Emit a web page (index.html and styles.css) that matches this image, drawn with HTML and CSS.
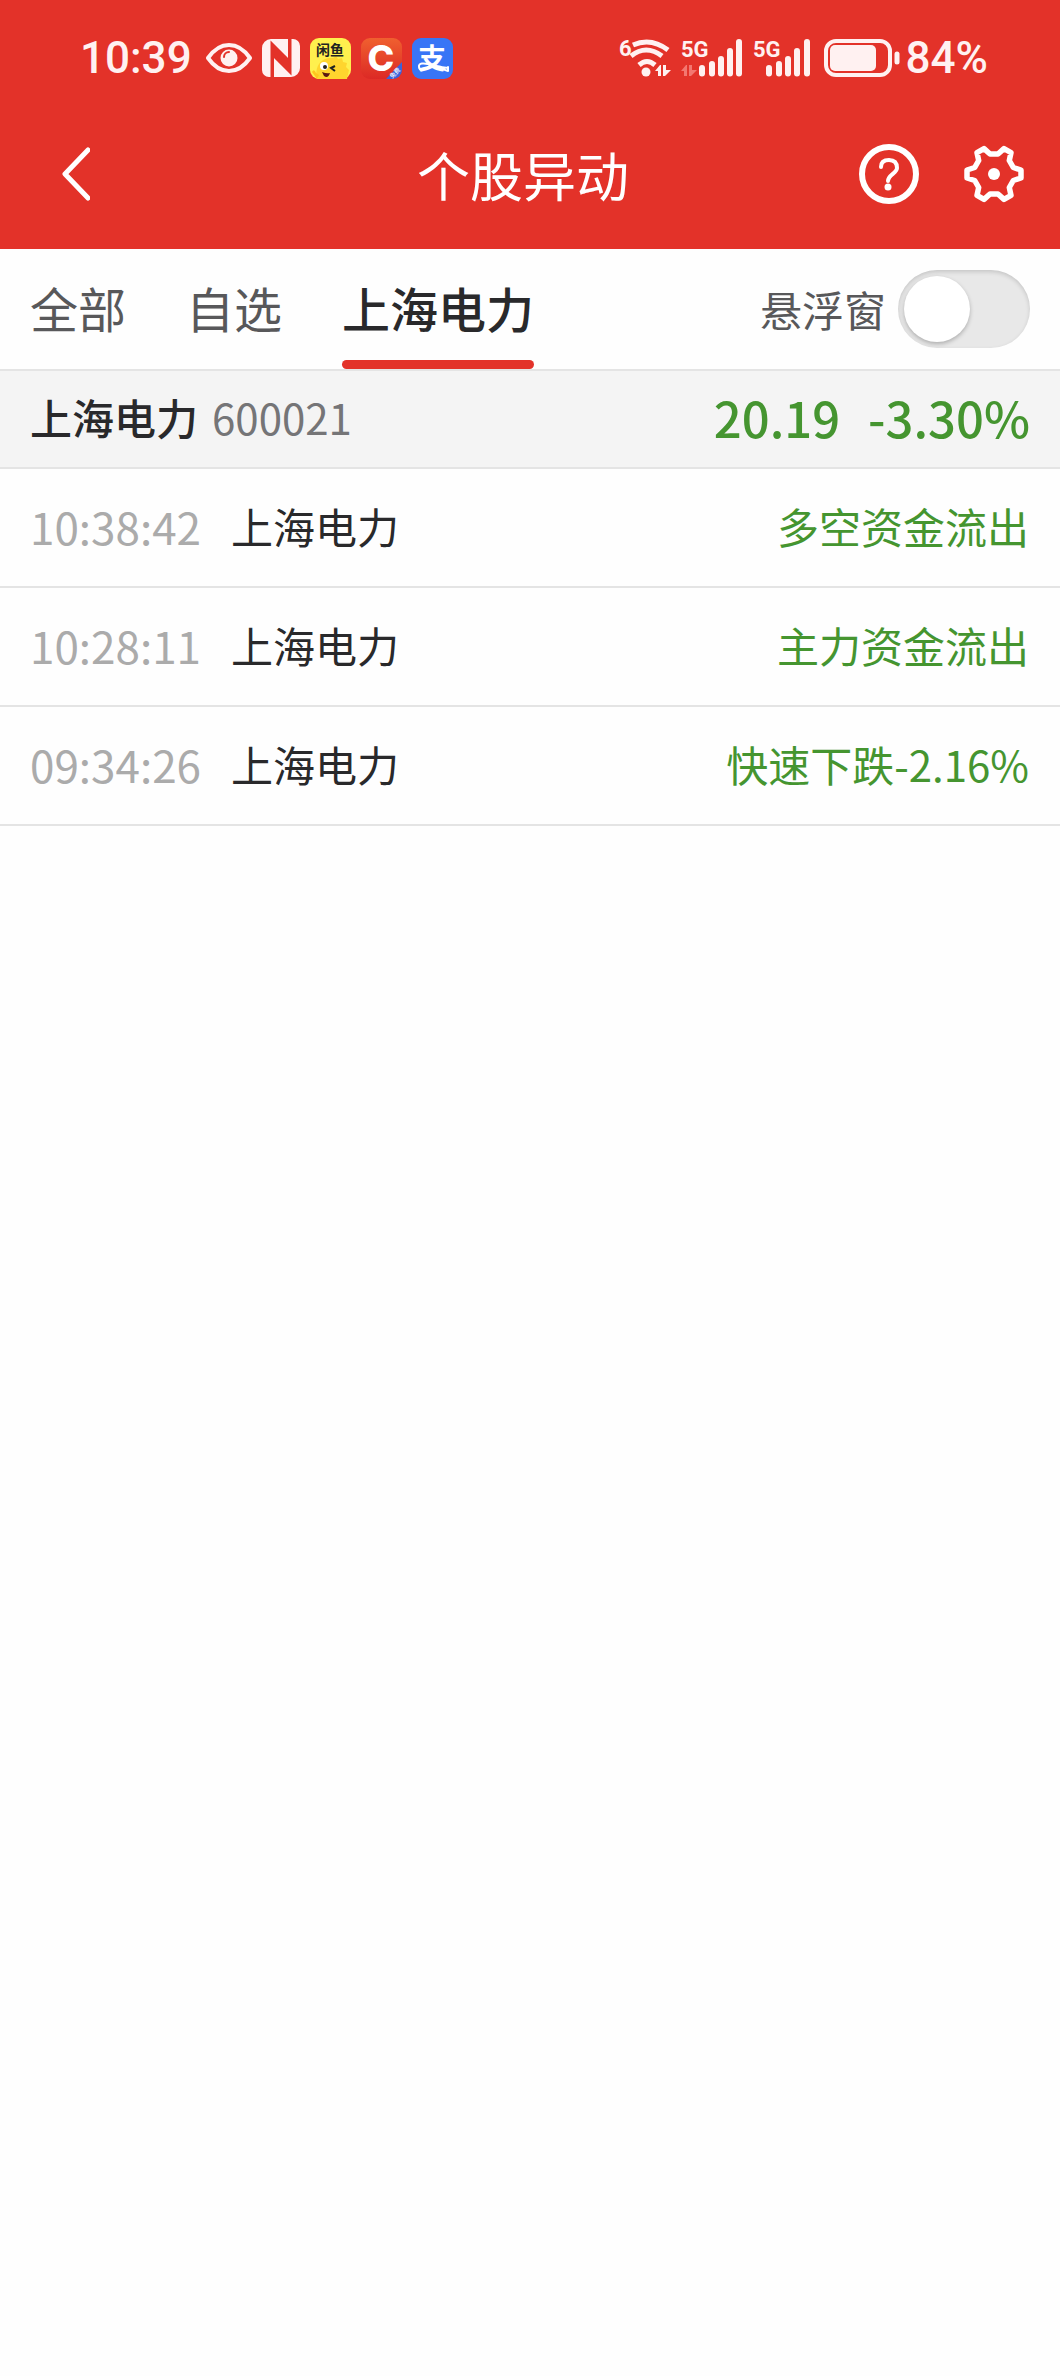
FILE: index.html
```html
<!DOCTYPE html>
<html lang="zh-CN">
  <head>
    <meta charset="UTF-8" />
    <meta name="viewport" content="width=device-width, initial-scale=1.0" />
    <title>个股异动</title>
    <link rel="stylesheet" href="styles.css">
  </head>
  <body>
    <header class="header">
      <div class="status">
        <div class="status-left">
          <span class="clock">10:39</span>
          <svg width="46" height="32" viewBox="0 0 46 32">
            <path d="M2 16Q11 3 23 3T44 16Q35 29 23 29T2 16Z" fill="none" stroke="#fff1f1" stroke-width="4" stroke-linejoin="round" />
            <circle cx="23" cy="16" r="8.500" fill="#fff1f1" />
            <path d="M18 15a5 5 0 0 1 5-5" fill="none" stroke="#e33229" stroke-width="2" stroke-linecap="round" />
          </svg>
          <svg width="38" height="38" viewBox="0 0 38 38">
            <path d="M9 0h17v21L9 5v33H7a7 7 0 0 1-7-7V9a9 9 0 0 1 9-9Z" fill="#fff1f1" />
            <path d="M29 38H12V17l17 16V0h2a7 7 0 0 1 7 7v22a9 9 0 0 1-9 9Z" fill="#fff1f1" />
            <path d="M10 38V5l17 17M28 0v33L11 16" fill="none" stroke="#e33229" stroke-width="3" />
          </svg>
          <svg width="41" height="41" viewBox="0 0 41 41">
            <rect width="41" height="41" rx="9" fill="#fff04e" />
            <path d="M7 41C4 26 13 19 23 20l3-2 2 3 4-1 1 4 4 1-1 4 3 3-2 9Z" fill="#ffd52e" />
            <path d="M2 34q2-4 4 1l3 2-2 4Z" fill="#ffc51f" />
            <circle cx="14" cy="28" r="4" fill="#fff" />
            <circle cx="15" cy="29" r="2" fill="#222" />
            <path d="m25 28-4 2 4 3" fill="none" stroke="#222" stroke-width="2" />
            <path d="M12 34q5 2 8 1-2 6-6 3Z" fill="#5b1712" />
            <text x="6" y="17" class="app-fish">闲鱼</text>
          </svg>
          <svg width="41" height="41" viewBox="0 0 41 41">
            <defs>
              <linearGradient id="appRed" x2="0" y2="1">
                <stop stop-color="#f0602f" />
                <stop offset="1" stop-color="#dc2925" />
              </linearGradient>
            </defs>
            <rect width="41" height="41" rx="9" fill="url(#appRed)" />
            <path d="M41 24v8a9 9 0 0 1-9 9h-7Z" fill="#3a63dc" />
            <text x="20" y="33" class="app-c">C</text>
            <text x="34" y="37" class="app-free" transform="rotate(-45 34 35)">免费</text>
          </svg>
          <svg width="41" height="41" viewBox="0 0 41 41">
            <rect width="41" height="41" rx="9" fill="#3875f6" />
            <text x="20" y="31" class="app-pay">支</text>
            <path d="M18 28Q8 35 7 29t14-2 15 2v4q-8-2-16-7" fill="none" stroke="#fff" stroke-width="2" stroke-linejoin="round" />
          </svg>
        </div>
        <div class="status-right">
          <svg width="52" height="42" viewBox="0 0 52 42">
            <text x="0" y="19" class="net">6</text>
            <g fill="none" stroke="#fff1f1" stroke-width="5">
              <path d="M14 8q18-8 35 5" />
              <path d="M12 19q15-12 31 0" />
              <path d="M20 28q8-7 16 0" />
            </g>
            <circle cx="27" cy="35" r="4.500" fill="#fff1f1" />
            <path d="m36 34 5-6h1v11h-3v-5ZM44 28h3v5h5l-6 6h-2Z" fill="#fff1f1" />
          </svg>
          <svg width="62" height="42" viewBox="0 0 62 42">
            <text x="0" y="20" class="net">5G</text>
            <path d="m0 34 5-6h1v11H3v-5ZM8 28h3v5h5l-6 6H8Z" fill="#f37770" />
            <path d="M21 31v5.500M31 27v9.500M40 22v14.500M49 14v22.500M58 5v31.500" stroke="#fff1f1" stroke-width="6" stroke-linecap="round" />
          </svg>
          <svg width="57" height="42" viewBox="0 0 57 42">
            <text x="0" y="20" class="net">5G</text>
            <path d="M16 31v5.500M26 27v9.500M35 22v14.500M44 14v22.500M54 5v31.500" stroke="#fff1f1" stroke-width="6" stroke-linecap="round" />
          </svg>
          <svg class="battery" width="76" height="38" viewBox="0 0 76 38">
            <rect x="2" y="2" width="64" height="34" rx="10" fill="none" stroke="#fff1f1" stroke-width="4" />
            <rect x="6" y="6" width="46" height="26" rx="5" fill="#fff1f1" />
            <path d="M73 15v8" stroke="#fff1f1" stroke-width="5" stroke-linecap="round" />
          </svg>
          <span class="percent">84%</span>
        </div>
      </div>

      <nav class="nav">
        <button class="icon-btn back" aria-label="返回">
          <svg width="28" height="56" viewBox="0 0 28 56">
            <path d="M26 4 3 28l23 24" fill="none" stroke="#fff" stroke-width="5" stroke-linecap="round" stroke-linejoin="round" />
          </svg>
        </button>
        <h1 class="title">个股异动</h1>
        <div class="actions">
          <button class="icon-btn" aria-label="帮助">
            <svg width="60" height="60" viewBox="0 0 60 60" fill="none" stroke="#fff">
              <circle cx="30" cy="30" r="27" stroke-width="6" />
              <path d="M22 23q0-7 8-7t8 8c0 5-9 7-9 13" stroke-width="4" stroke-linecap="round" />
              <circle cx="29" cy="43" r="3.500" fill="#fff" stroke="none" />
            </svg>
          </button>
          <button class="icon-btn" aria-label="设置">
            <svg width="60" height="60" viewBox="-30 -30 60 60">
              <path d="M19.300-6.500 27-4V4L19.300 6.500 15.300 13.500 17 21.400 10 25.400 4 20H-4L-10 25.400-17 21.400-15.300 13.500-19.300 6.500-27 4V-4L-19.300-6.500-15.300-13.500-17-21.400-10-25.400-4-20H4L10-25.400 17-21.400 15.300-13.500Z" fill="none" stroke="#fff" stroke-width="5.500" stroke-linejoin="round" />
              <circle r="6" fill="#fff" />
            </svg>
          </button>
        </div>
      </nav>
    </header>

    <main>
      <div class="toolbar">
        <div class="tabs" role="tablist">
          <button class="tab" role="tab">全部</button>
          <button class="tab" role="tab">自选</button>
          <button class="tab active" role="tab" aria-selected="true">上海电力</button>
        </div>
        <label class="float-window">
          悬浮窗
          <input class="switch" type="checkbox" role="switch" />
        </label>
      </div>

      <section class="stock">
        <h2 class="stock-name">上海电力</h2>
        <span class="stock-code">600021</span>
        <span class="price">20.19</span>
        <span class="change">-3.30%</span>
      </section>

      <table class="events">
        <tbody>
          <tr>
            <td class="time">10:38:42</td>
            <td class="name">上海电力</td>
            <td class="event">多空资金流出</td>
          </tr>
          <tr>
            <td class="time">10:28:11</td>
            <td class="name">上海电力</td>
            <td class="event">主力资金流出</td>
          </tr>
          <tr>
            <td class="time">09:34:26</td>
            <td class="name">上海电力</td>
            <td class="event">快速下跌-2.16%</td>
          </tr>
        </tbody>
      </table>
    </main>
  </body>
</html>
```
FILE: styles.css
```css
* {
  box-sizing: border-box;
}

body {
  margin: 0;
  background: #fefefe;
  color: #29292b;
  font-family: "Noto Sans CJK SC", sans-serif;
  font-size: 42px;
  line-height: 60px;
}

button {
  padding: 0;
  border: none;
  background: none;
  font: inherit;
  cursor: pointer;
}

svg {
  display: block;
  flex-shrink: 0;
}

/* header */
.header {
  background: #e33229;
  color: #fff;
}

.status {
  display: flex;
  justify-content: space-between;
  align-items: center;
  height: 99px;
  padding: 17px 72px 0 80px;
  color: #fff1f1;
  font-family: Roboto, sans-serif;
  font-size: 44px;
  font-weight: 500;
}

.status-left,
.status-right {
  display: flex;
  align-items: center;
  gap: 10px;
}

.clock {
  margin-right: 4px;
}

.status-right {
  gap: 6px;
}

.status-right svg + svg {
  margin-left: 4px;
}

.status-right .battery {
  margin-left: 8px;
}

.net {
  fill: #fff1f1;
  font-size: 22px;
  font-weight: 700;
}

.app-fish {
  fill: #222;
  font-family: "Noto Sans CJK SC", sans-serif;
  font-size: 14px;
  font-weight: 700;
}

.app-c {
  fill: #fff;
  font-family: Inter, sans-serif;
  font-size: 36px;
  font-weight: 800;
  text-anchor: middle;
}

.app-free {
  fill: #fff;
  font-family: "Noto Sans CJK SC", sans-serif;
  font-size: 6px;
  text-anchor: middle;
}

.app-pay {
  fill: #fff;
  font-family: "Noto Sans CJK SC", sans-serif;
  font-size: 28px;
  font-weight: 700;
  text-anchor: middle;
}

.nav {
  display: grid;
  grid-template-columns: 1fr auto 1fr;
  align-items: center;
  height: 150px;
  padding: 0 36px 0 22px;
}

.icon-btn {
  display: block;
}

.back {
  justify-self: start;
  padding: 0 40px;
}

.title {
  margin: 0;
  font-size: 53px;
  font-weight: 400;
}

.actions {
  display: flex;
  justify-content: flex-end;
  gap: 45px;
}

/* tabs */
.toolbar {
  display: flex;
  justify-content: space-between;
  height: 122px;
  padding: 0 30px;
  border-bottom: 2px solid #e4e4e4;
}

.tabs {
  display: flex;
  gap: 60px;
}

.tab {
  position: relative;
  padding-bottom: 4px;
  color: #58585a;
  font-size: 48px;
}

.tab.active {
  color: #29292b;
  font-weight: 500;
}

.tab.active::after {
  content: "";
  position: absolute;
  left: 0;
  right: 0;
  bottom: 0;
  height: 9px;
  border-radius: 5px;
  background: #e33229;
}

.float-window {
  display: flex;
  align-items: center;
  gap: 12px;
  color: #58585a;
}

.switch {
  appearance: none;
  width: 132px;
  height: 78px;
  margin: 0;
  padding: 6px;
  border-radius: 39px;
  background: #e8e8e8;
  box-shadow: inset 0 2px 4px rgba(0, 0, 0, 0.15);
  cursor: pointer;
}

.switch::before {
  content: "";
  display: block;
  width: 66px;
  height: 66px;
  border-radius: 50%;
  background: #fff;
  box-shadow: 0 2px 4px rgba(0, 0, 0, 0.25);
}

.switch:checked {
  background: #e33229;
}

.switch:checked::before {
  margin-left: auto;
}

/* current stock */
.stock {
  display: flex;
  align-items: center;
  height: 98px;
  padding: 0 30px 4px;
  border-bottom: 2px solid #e4e4e4;
  background: #f4f4f4;
}

.stock-name {
  margin: 0;
  font-size: 42px;
  font-weight: 500;
}

.stock-code {
  margin-left: 14px;
  color: #757577;
}

.price,
.change {
  color: #459530;
  font-size: 49px;
  font-weight: 500;
}

.price {
  margin-left: auto;
}

.change {
  margin-left: 28px;
}

/* event list */
.events {
  width: 100%;
  border-spacing: 0;
}

.events td {
  height: 119px;
  padding: 0 0 4px;
  border-bottom: 2px solid #e4e4e4;
  white-space: nowrap;
}

.events .time {
  width: 231px;
  padding-left: 30px;
  color: #ababab;
  font-size: 44px;
}

.events .event {
  padding-right: 31px;
  color: #459530;
  text-align: right;
}
```
